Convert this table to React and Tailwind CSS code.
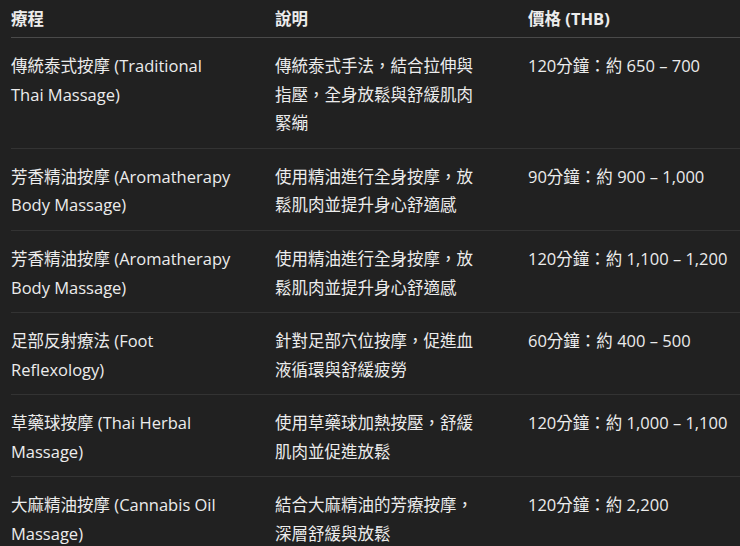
const rows = [
  ["傳統泰式按摩 (Traditional Thai Massage)", "傳統泰式手法，結合拉伸與指壓，全身放鬆與舒緩肌肉緊繃", "120分鐘：約 650 – 700"],
  ["芳香精油按摩 (Aromatherapy Body Massage)", "使用精油進行全身按摩，放鬆肌肉並提升身心舒適感", "90分鐘：約 900 – 1,000"],
  ["芳香精油按摩 (Aromatherapy Body Massage)", "使用精油進行全身按摩，放鬆肌肉並提升身心舒適感", "120分鐘：約 1,100 – 1,200"],
  ["足部反射療法 (Foot Reflexology)", "針對足部穴位按摩，促進血液循環與舒緩疲勞", "60分鐘：約 400 – 500"],
  ["草藥球按摩 (Thai Herbal Massage)", "使用草藥球加熱按壓，舒緩肌肉並促進放鬆", "120分鐘：約 1,000 – 1,100"],
  ["大麻精油按摩 (Cannabis Oil Massage)", "結合大麻精油的芳療按摩，深層舒緩與放鬆", "120分鐘：約 2,200"],
];

export default function App() {
  return (
    <div
      className="w-[740px] h-[546px] overflow-hidden bg-[#212121] pl-[11px] text-[#ececec] text-[16.5px] leading-[28.8px]"
      style={{ fontFamily: '"Open Sans", "Noto Sans CJK TC", sans-serif' }}
    >
      <table className="table-fixed border-collapse w-[760px]">
        <colgroup>
          <col className="w-[264px]" />
          <col className="w-[253px]" />
          <col />
        </colgroup>
        <thead>
          <tr className="border-b border-[#4a4a4a]">
            <th className="text-left font-bold pt-[5px] pb-[3px] pr-[40px]">療程</th>
            <th className="text-left font-bold pt-[5px] pb-[3px] pr-[48px]">說明</th>
            <th className="text-left font-bold pt-[5px] pb-[3px]">價格 (THB)</th>
          </tr>
        </thead>
        <tbody>
          {rows.map((r, i) => (
            <tr key={i} className="border-b border-[#333333]">
              <td className="align-top pt-[14px] pb-[9.5px] pr-[40px]">{r[0]}</td>
              <td className="align-top pt-[14px] pb-[9.5px] pr-[47px]">{r[1]}</td>
              <td className="align-top pt-[14px] pb-[9.5px] whitespace-nowrap">{r[2]}</td>
            </tr>
          ))}
        </tbody>
      </table>
    </div>
  );
}
